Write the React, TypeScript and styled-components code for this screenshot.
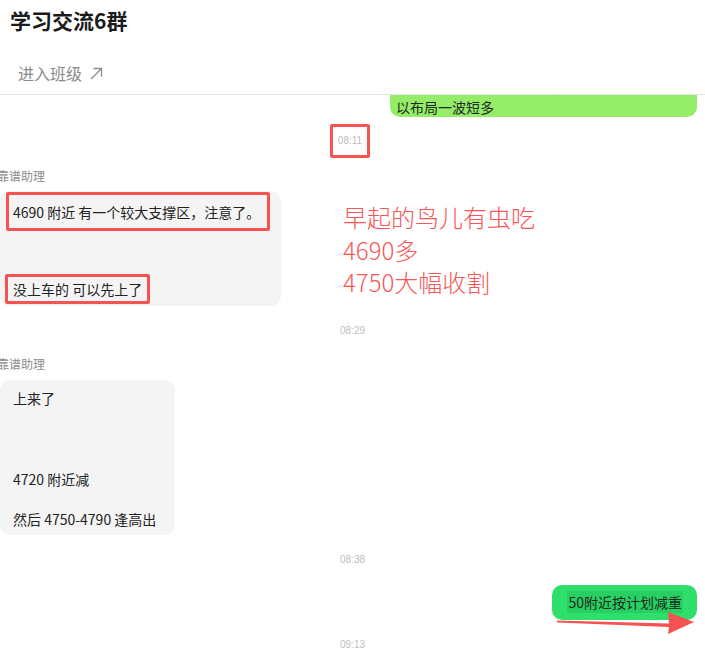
import styled, { createGlobalStyle } from 'styled-components';

const GlobalStyle = createGlobalStyle`
  html, body {
    margin: 0;
    padding: 0;
    background: #fff;
    overflow: hidden;
  }
  body {
    font-family: "Noto Sans CJK SC", "Noto Sans", sans-serif;
  }
`;

export default function App() {
  return (
    <Page>
      <GlobalStyle />
      <Header>
        <Title>学习交流6群</Title>
        <ClassLink>
          进入班级
          <svg width="13" height="13" viewBox="0 0 13 13" fill="none" stroke="currentColor" strokeWidth="1.3">
            <path d="M1 12 L11.5 1.5 M3.5 1.5 H11.5 V9.5" />
          </svg>
        </ClassLink>
      </Header>

      <Chat>
        <TopBubble>
          4690附近多单可以先上车，短线的可
          <br />
          以布局一波短多
        </TopBubble>

        <TimeMarked>08:11</TimeMarked>

        <Sender $gap={10}>靠谱助理</Sender>
        <GrayBubble>
          <Mark $variant="wide">4690 附近 有一个较大支撑区，注意了。</Mark>
          <Mark $variant="narrow">没上车的 可以先上了</Mark>
        </GrayBubble>

        <Time>08:29</Time>

        <Sender $gap={18}>靠谱助理</Sender>
        <PlainBubble>{'上来了\n\n\n\n4720 附近减\n\n然后 4750-4790 逢高出'}</PlainBubble>

        <Time>08:38</Time>

        <MineBubble>
          <Highlight>50附近按计划减重</Highlight>
        </MineBubble>

        <Time>09:13</Time>
      </Chat>

      <Note>
        早起的鸟儿有虫吃
        <br />
        4690多
        <br />
        4750大幅收割
      </Note>

      <Arrow width="150" height="30" viewBox="0 0 150 30">
        <path d="M2 10.5 L114 13.5 L113 2 L139 12 L113 24 L114 17 L2 12.5 Z" fill="#f75252" />
      </Arrow>
    </Page>
  );
}

const Page = styled.div`
  position: relative;
  width: 705px;
  height: 656px;
  overflow: hidden;
`;

const Header = styled.header`
  padding: 6px 0 10px 10px;
  border-bottom: 1px solid #e6e6e6;
`;

const Title = styled.h1`
  margin: 0;
  font-size: 21px;
  line-height: 28px;
  font-weight: 700;
  color: #1b1b1b;
`;

const ClassLink = styled.div`
  display: flex;
  align-items: center;
  gap: 8px;
  margin-top: 28px;
  padding-left: 8px;
  height: 22px;
  font-size: 16px;
  color: #8a8a8a;
`;

const Chat = styled.main`
  display: flex;
  flex-direction: column;
  height: 561px;
  overflow: hidden;
`;

const TopBubble = styled.div`
  align-self: flex-end;
  box-sizing: border-box;
  width: 307px;
  margin: -24px 8px 0 0;
  padding: 6px 10px 0 6px;
  background: #95ec69;
  border-radius: 10px;
  font-size: 14px;
  line-height: 20px;
  color: #1d2a1d;
  white-space: nowrap;
`;

const MineBubble = styled.div`
  align-self: flex-end;
  margin: 18px 8px 0 0;
  padding: 7px 14px 8px 15px;
  background: #2ee06b;
  border-radius: 10px;
  font-size: 14px;
  line-height: 20px;
  color: #1d2a1d;
  white-space: nowrap;
`;

const Highlight = styled.span`
  background: #28d063;
  padding: 1px 1px;
`;

const Time = styled.div`
  align-self: center;
  margin-top: 18px;
  font-size: 10px;
  line-height: 14px;
  color: #bdbdbd;
  font-family: "Liberation Sans", sans-serif;
`;

const TimeMarked = styled(Time)`
  margin-top: 7px;
  margin-left: -5px;
  padding: 7px 5px;
  border: 3px solid #f75252;
  border-radius: 2px;
`;

const Sender = styled.div<{ $gap: number }>`
  margin: ${(p) => p.$gap}px 0 0 -3px;
  font-size: 12px;
  line-height: 16px;
  color: #8c8c8c;
`;

const GrayBubble = styled.div`
  align-self: flex-start;
  display: flex;
  flex-direction: column;
  align-items: flex-start;
  gap: 43px;
  margin-top: 7px;
  padding: 1px 11px 2px 6px;
  background: #f4f4f4;
  border-radius: 10px;
  font-size: 14px;
  line-height: 20px;
  color: #222;
`;

const Mark = styled.span<{ $variant: 'wide' | 'narrow' }>`
  display: inline-block;
  border: 3px solid #f75252;
  border-radius: 2px;
  padding: ${(p) => (p.$variant === 'wide' ? '7px 7px 6px 4px' : '2px 5px')};
  margin-left: ${(p) => (p.$variant === 'wide' ? '0' : '-1px')};
`;

const PlainBubble = styled.div`
  align-self: flex-start;
  margin-top: 8px;
  padding: 8px 19px 6px 13px;
  background: #f4f4f4;
  border-radius: 10px;
  font-size: 14px;
  line-height: 20.2px;
  color: #222;
  white-space: pre-line;
`;

const Note = styled.div`
  position: absolute;
  left: 343px;
  top: 201px;
  font-size: 24px;
  font-weight: 300;
  line-height: 32.5px;
  color: #f75656;
`;

const Arrow = styled.svg`
  position: absolute;
  left: 555px;
  top: 610px;
`;
